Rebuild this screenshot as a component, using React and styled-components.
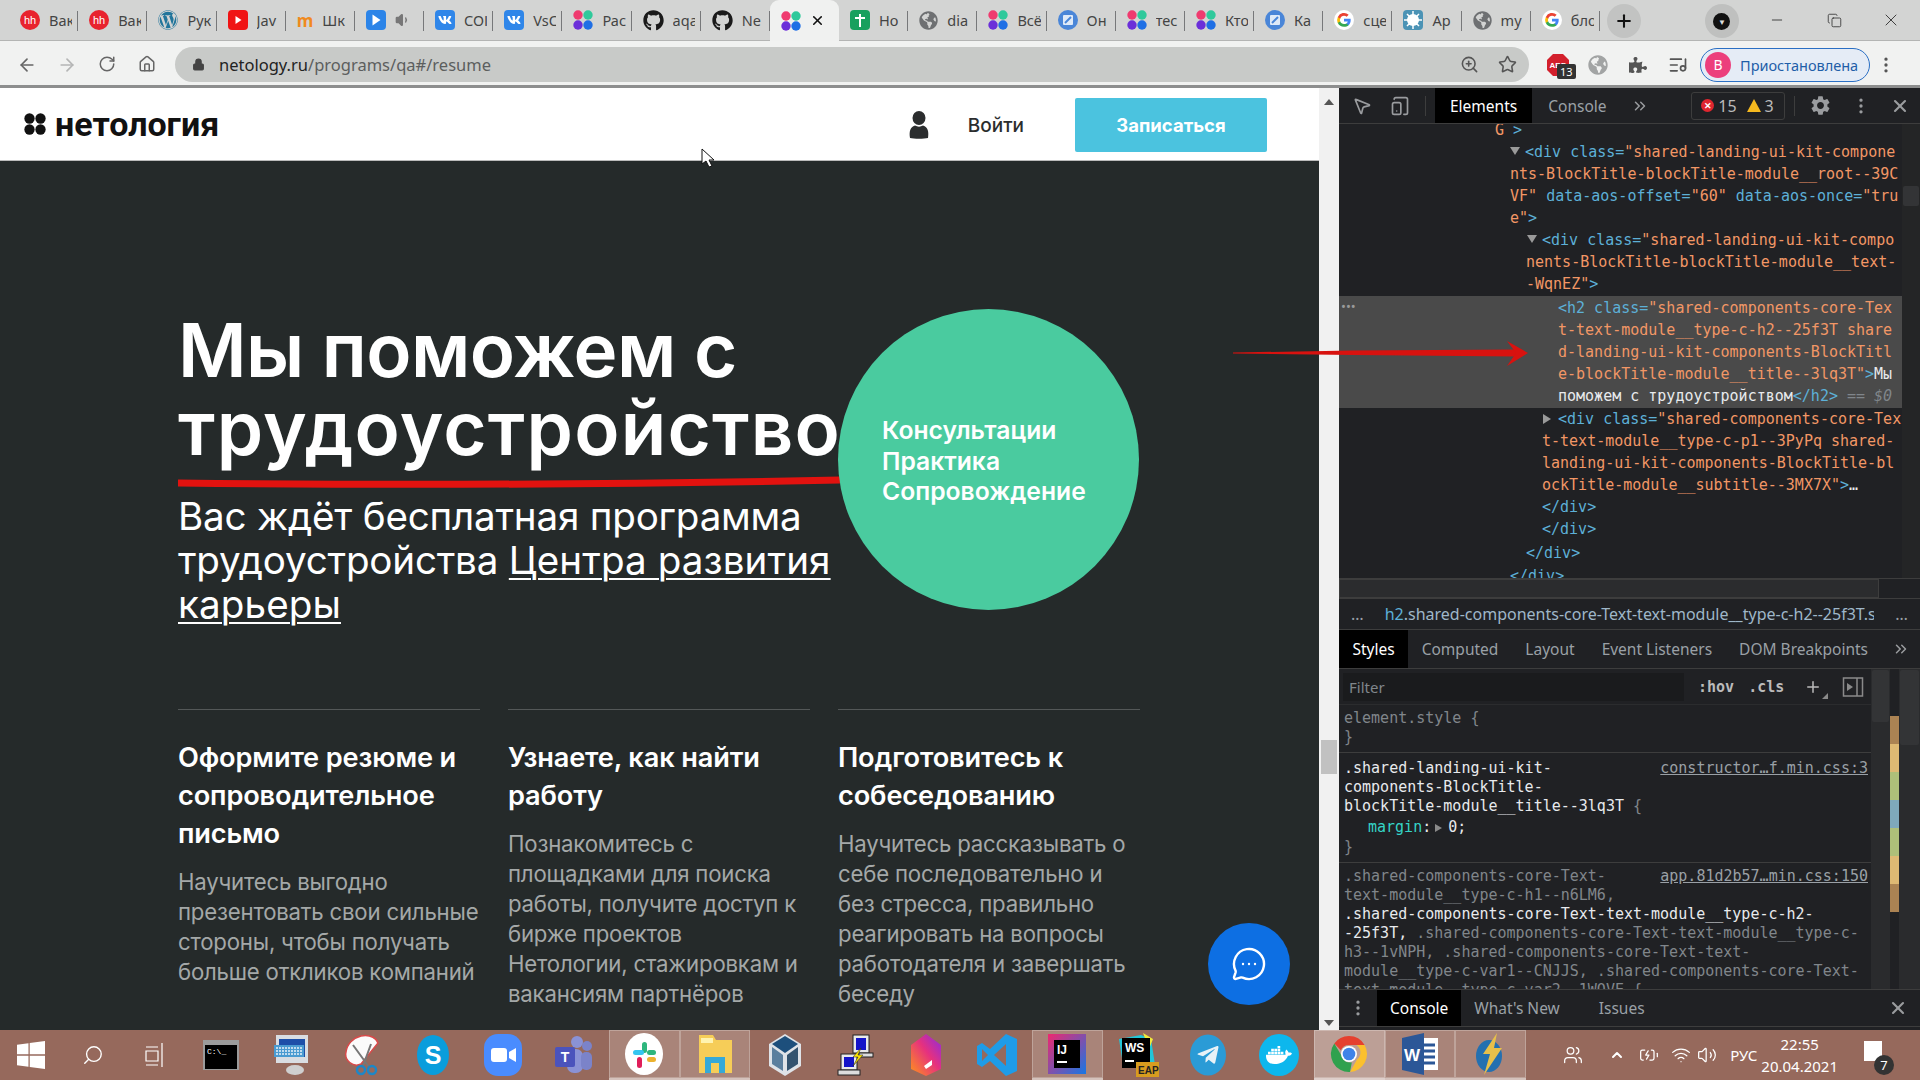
import React from "react";
import styled, { createGlobalStyle } from "styled-components";
import {
  ArrowLeft, ArrowRight, RotateCw, Home, Lock, ZoomIn, Star, ListMusic, MoreVertical,
  Plus, Minus, X, ChevronsRight, MousePointer2, TabletSmartphone, Search,
  Wifi, Volume1, Volume2, BatteryCharging, Users, ChevronUp, Copy, MessageCircleMore,
} from "lucide-react";
import { FaPuzzlePiece, FaGithub, FaVk, FaWordpress, FaWindows, FaTelegramPlane, FaDocker, FaGlobeAmericas } from "react-icons/fa";
import { MdSettings } from "react-icons/md";

const GlobalStyle = createGlobalStyle`
  html, body { margin: 0; padding: 0; background: #222; }
  * { box-sizing: border-box; }
`;

const UI = `"Noto Sans", "Open Sans", sans-serif`;
const MONO = `"DejaVu Sans Mono", "Liberation Mono", monospace`;

const Root = styled.div`
  width: 1920px;
  height: 1080px;
  overflow: hidden;
  position: relative;
  display: grid;
  grid-template-columns: 1920px;
  grid-template-rows: 41px 47px 942px 50px;
  font-family: ${UI};
`;

/* ---------- chrome ---------- */

const TabStrip = styled.div`
  background: #d3d4d3;
  display: flex;
  align-items: stretch;
  padding-left: 9px;
  border-bottom: 1px solid #b4b5b4;
`;
const Tab = styled.div`
  width: 69.2px;
  height: ${(p) => (p.$active ? "41px" : "40px")};
  display: flex;
  align-items: center;
  gap: 9px;
  padding: 0 6px 0 11px;
  position: relative;
  background: ${(p) => (p.$active ? "#f0f1f0" : "transparent")};
  border-radius: ${(p) => (p.$active ? "9px 9px 0 0" : "0")};
  color: #444;
  font-size: 14.5px;
  &::after {
    content: "";
    position: absolute;
    right: 0;
    top: 11px;
    height: 20px;
    width: 1px;
    background: ${(p) => (p.$active ? "transparent" : "#77787a")};
  }
`;
const TabLabel = styled.span`
  overflow: hidden;
  white-space: nowrap;
  flex: 1;
  display: flex;
  align-items: center;
`;
const StripButton = styled.div`
  width: 34px;
  height: 34px;
  border-radius: 50%;
  background: #c2c3c2;
  margin: 4px 0 0 ${(p) => p.$left}px;
  display: flex;
  align-items: center;
  justify-content: center;
  color: #111;
`;
const ProfileDot = styled(StripButton)`
  background: #bfc0bf;
`;
const DarkDot = styled.div`
  width: 17px;
  height: 17px;
  border-radius: 50%;
  background: #111;
  color: #ddd;
  font-size: 8px;
  display: flex;
  align-items: center;
  justify-content: center;
`;
const WinButton = styled.div`
  width: 57px;
  display: flex;
  align-items: center;
  justify-content: center;
  color: #222;
`;
const WinButtons = styled.div`
  display: flex;
  margin-left: 10px;
`;

const Toolbar = styled.div`
  background: #f1f2f1;
  display: flex;
  align-items: center;
  padding: 3px 0 0 0;
  color: #666;
  border-bottom: 3px solid #8d8e8e;
`;
const NavButton = styled.div`
  width: 40px;
  display: flex;
  justify-content: center;
  color: ${(p) => (p.$off ? "#b4b5b5" : "#666")};
`;
const NavGroup = styled.div`
  display: flex;
  padding-left: 7px;
`;
const Omnibox = styled.div`
  width: 1354px;
  height: 35px;
  margin-left: 8px;
  border-radius: 18px;
  background: #c8cac8;
  display: flex;
  align-items: center;
  padding: 0 12px 0 17px;
  gap: 14px;
  font-size: 16.5px;
  color: #5c5e5e;
`;
const UrlHost = styled.span`
  color: #222;
`;
const OmniIcons = styled.div`
  margin-left: auto;
  display: flex;
  gap: 19px;
  align-items: center;
  color: #555;
`;
const ExtSlot = styled.div`
  width: 40px;
  margin-left: ${(p) => p.$left || 0}px;
  display: flex;
  justify-content: center;
  position: relative;
  color: #555;
`;
const AbpBadge = styled.span`
  position: absolute;
  left: 19px;
  top: 11px;
  background: #333;
  color: #fff;
  font-size: 11px;
  line-height: 15px;
  padding: 0 3px;
  border-radius: 2px;
`;
const ProfilePill = styled.div`
  width: 170px;
  height: 34px;
  margin-left: 2px;
  border-radius: 17px;
  border: 1px solid #2a6fc4;
  background: #e5ecf6;
  display: flex;
  align-items: center;
  gap: 9px;
  padding-left: 4px;
  color: #1f5ea8;
  font-size: 14.5px;
  white-space: nowrap;
`;
const Avatar = styled.span`
  width: 26px;
  height: 26px;
  border-radius: 50%;
  background: #ec3f7c;
  color: #fff;
  font-size: 14px;
  display: flex;
  align-items: center;
  justify-content: center;
  flex: none;
`;
const ToolbarEnd = styled.div`
  margin-left: 6px;
  color: #555;
  display: flex;
`;

/* ---------- page ---------- */

const Main = styled.div`
  display: flex;
  min-height: 0;
  min-width: 0;
`;
const Page = styled.div`
  width: 1319px;
  display: flex;
  flex-direction: column;
  background: #252a2a;
  overflow: hidden;
  flex: none;
`;
const Header = styled.header`
  height: 73px;
  background: #fff;
  display: flex;
  align-items: center;
  padding: 2px 52px 0 24px;
  flex: none;
  border-bottom: 1px solid #bbb;
`;
const Brand = styled.div`
  display: flex;
  align-items: center;
  gap: 9px;
  font-family: Roboto, sans-serif;
  font-weight: 700;
  font-size: 34px;
  line-height: 34px;
  margin-top: -3px;
  color: #111;
`;
const Login = styled.div`
  margin-left: auto;
  display: flex;
  align-items: center;
  gap: 39px;
  color: #2b2d2e;
  font-family: Inter, sans-serif;
  font-size: 19px;
  font-weight: 500;
`;
const SignUp = styled.div`
  width: 192px;
  height: 54px;
  margin-left: 51px;
  background: #4bc3df;
  border-radius: 2px;
  color: #fff;
  font-family: Inter, sans-serif;
  font-size: 18.5px;
  font-weight: 700;
  display: flex;
  align-items: center;
  justify-content: center;
`;
const Hero = styled.section`
  flex: 1;
  padding: 148px 179px 0 178px;
  color: #fff;
  position: relative;
`;
const Top = styled.div`
  display: grid;
  grid-template-columns: 660px 302px;
  height: 400px;
`;
const Title = styled.h2`
  margin: 2px 0 0;
  font-family: Inter, sans-serif;
  font-size: 74.4px;
  line-height: 78px;
  font-weight: 600;
  letter-spacing: -0.6px;
  white-space: nowrap;
  position: relative;
`;
const TitleWide = styled.span`
  letter-spacing: 1.2px;
`;
const Underline = styled.svg`
  position: absolute;
  left: 0;
  top: 165px;
`;
const Subtitle = styled.div`
  margin-top: 27px;
  font-family: Inter, sans-serif;
  font-size: 38.6px;
  line-height: 44px;
  letter-spacing: -0.2px;
  a {
    color: inherit;
    letter-spacing: 0.1px;
    text-decoration: underline;
    text-decoration-thickness: 2px;
    text-underline-offset: 4px;
  }
`;
const Circle = styled.div`
  width: 301px;
  height: 301px;
  border-radius: 50%;
  background: #4acb9f;
  display: flex;
  flex-direction: column;
  justify-content: center;
  padding: 3px 0 0 44px;
  font-family: Inter, sans-serif;
  font-size: 24.7px;
  line-height: 30.5px;
  font-weight: 600;
  position: relative;
  z-index: 1;
`;
const Features = styled.div`
  display: grid;
  grid-template-columns: repeat(3, 302px);
  gap: 28px;
`;
const Feature = styled.div`
  border-top: 1px solid rgba(255, 255, 255, 0.22);
  padding-top: 29px;
`;
const FeatureTitle = styled.div`
  font-family: Inter, sans-serif;
  font-size: 27.2px;
  line-height: 38px;
  font-weight: 600;
  letter-spacing: -0.15px;
`;
const FeatureText = styled.div`
  margin-top: 14px;
  font-family: Inter, sans-serif;
  font-size: 22.2px;
  line-height: 30px;
  color: #a4a8a8;
  letter-spacing: -0.2px;
`;
const Chat = styled.div`
  position: absolute;
  left: 1208px;
  top: 762px;
  width: 82px;
  height: 82px;
  border-radius: 50%;
  background: #0d6fe3;
  color: #fff;
  display: flex;
  align-items: center;
  justify-content: center;
`;
const PageScroll = styled.div`
  width: 20px;
  flex: none;
  background: #f1f1f1;
  position: relative;
`;
const ScrollArrow = styled.div`
  position: absolute;
  left: 5px;
  top: ${(p) => p.$top}px;
  width: 0;
  height: 0;
  border-left: 5px solid transparent;
  border-right: 5px solid transparent;
  ${(p) => (p.$down ? "border-top: 6px solid #555;" : "border-bottom: 6px solid #555;")}
`;
const ScrollThumb = styled.div`
  position: absolute;
  left: 2px;
  right: 2px;
  top: 652px;
  height: 34px;
  background: #c1c1c1;
`;

/* ---------- devtools ---------- */

const Devtools = styled.div`
  flex: 1;
  background: #202124;
  color: #9aa0a6;
  display: flex;
  flex-direction: column;
  min-width: 0;
`;
const DevBar = styled.div`
  height: 36px;
  display: flex;
  align-items: center;
  border-bottom: 1px solid #3d3d3d;
  font-size: 15.5px;
  flex: none;
`;
const BarIcon = styled.div`
  display: flex;
  justify-content: center;
  align-items: center;
  width: ${(p) => p.$w || 38}px;
  margin-left: ${(p) => p.$left || 0}px;
  color: #9a9c9f;
`;
const DevTab = styled.div`
  height: 100%;
  display: flex;
  align-items: center;
  padding: 0 ${(p) => p.$pad || 13.5}px;
  background: ${(p) => (p.$active ? "#000" : "transparent")};
  color: ${(p) => (p.$active ? "#fff" : "#9aa0a6")};
  white-space: nowrap;
`;
const Divider = styled.div`
  width: 1px;
  height: 20px;
  background: #3d3d3d;
  margin: 0 ${(p) => p.$right || 0}px 0 ${(p) => p.$left || 0}px;
`;
const Counts = styled.div`
  width: 94px;
  height: 28px;
  margin-left: ${(p) => p.$left}px;
  border: 1px solid #3d3d3d;
  border-radius: 3px;
  display: flex;
  align-items: center;
  justify-content: center;
  gap: 4px;
  color: #bbb;
  font-size: 16px;
`;
const ErrorDot = styled.span`
  width: 13px;
  height: 13px;
  border-radius: 50%;
  background: #e0262f;
  color: #fff;
  font-size: 9px;
  font-weight: 700;
  display: flex;
  align-items: center;
  justify-content: center;
`;
const WarnMark = styled.span`
  width: 0;
  height: 0;
  margin-left: 6px;
  border-left: 7px solid transparent;
  border-right: 7px solid transparent;
  border-bottom: 13px solid #f5b91f;
`;
const DomWrap = styled.div`
  display: flex;
  height: 454px;
  flex: none;
`;
const DomPanel = styled.div`
  flex: 1;
  overflow: hidden;
  font-family: ${MONO};
  font-size: 15px;
  line-height: 22px;
`;
const DomLine = styled.div`
  white-space: pre;
  padding-left: ${(p) => p.$x}px;
  height: ${(p) => p.$h || 22}px;
  position: relative;
  color: #e8eaed;
`;
const Tri = styled.span`
  position: absolute;
  margin-left: -15px;
  top: 6px;
  width: 0;
  height: 0;
  ${(p) =>
    p.$open
      ? "border-left: 5px solid transparent; border-right: 5px solid transparent; border-top: 8px solid #9a9a9a;"
      : "border-top: 5px solid transparent; border-bottom: 5px solid transparent; border-left: 8px solid #9a9a9a;"}
`;
const Selected = styled.div`
  background: #4a4a4a;
  padding: 1px 0 1px;
  margin: 1px 0 0;
  position: relative;
`;
const Dots = styled.span`
  position: absolute;
  left: 2px;
  top: -1px;
  color: #999;
  font-size: 13px;
  font-family: ${UI};
`;
const N = styled.span`
  color: #5db0d7;
`;
const V = styled.span`
  color: #f29766;
`;
const HScroll = styled.div`
  height: 21px;
  flex: none;
  padding-right: 41px;
  border-top: 1px solid #3d3d3d;
  border-bottom: 1px solid #3d3d3d;
  background: #202124;
`;
const HThumb = styled.div`
  height: 100%;
  background: #2b2c2e;
  border: 1px solid #3d3d3d;
`;
const Crumbs = styled.div`
  height: 31px;
  flex: none;
  display: flex;
  align-items: center;
  font-size: 16px;
  color: #9aa0a6;
  padding: 0 12px;
  border-bottom: 1px solid #3d3d3d;
  white-space: nowrap;
  gap: 21px;
`;
const CrumbText = styled.span`
  width: 496px;
  overflow: hidden;
  color: #9fb7c9;
  span { color: #5db0d7; }
`;
const StylesBar = styled(DevBar)`
  height: 39px;
`;
const StylesBody = styled.div`
  flex: 1;
  display: flex;
  min-height: 0;
`;
const RulesCol = styled.div`
  width: 532px;
  flex: none;
  display: flex;
  flex-direction: column;
  overflow: hidden;
`;
const FilterRow = styled.div`
  height: 36px;
  display: flex;
  align-items: center;
  padding: 0 4px;
  border-bottom: 1px solid #2b2c2e;
  flex: none;
`;
const FilterInput = styled.div`
  width: 341px;
  height: 28px;
  background: #1a1b1d;
  color: #80868b;
  font-size: 15px;
  line-height: 28px;
  padding-left: 6px;
`;
const FilterTool = styled.div`
  font-family: ${MONO};
  font-weight: 700;
  font-size: 15px;
  color: #bbb;
  margin-left: ${(p) => p.$left}px;
  display: flex;
  position: relative;
`;
const CornerMark = styled.span`
  position: absolute;
  right: -6px;
  bottom: -3px;
  width: 0;
  height: 0;
  border-left: 6px solid transparent;
  border-bottom: 6px solid #8a8a8a;
`;
const Rule = styled.div`
  padding: ${(p) => p.$top || 6}px 2px 5px 5px;
  border-bottom: 1px solid #3d3d3d;
  font-family: ${MONO};
  font-size: 15px;
  line-height: 19px;
  position: relative;
  color: #e8eaed;
  flex: none;
  &:last-child { border-bottom: 0; }
`;
const Source = styled.span`
  position: absolute;
  right: 3px;
  top: ${(p) => p.$top || 6}px;
  color: #9aa0a6;
  text-decoration: underline;
  background: #202124;
`;
const Dim = styled.span`
  color: #80868b;
`;
const Prop = styled.div`
  padding-left: 24px;
  line-height: 22px;
  color: #e8eaed;
  span { color: #35d4c7; }
`;
const MiniTri = styled.span`
  display: inline-block;
  border-top: 4px solid transparent;
  border-bottom: 4px solid transparent;
  border-left: 7px solid #8a8a8a;
  margin: 0 6px 0 4px;
`;
const ScrollRail = styled.div`
  width: ${(p) => p.$w}px;
  background: ${(p) => p.$bg || "#1c1d1f"};
  flex: none;
  position: relative;
`;
const ScrollGrip = styled.div`
  background: #333436;
  height: ${(p) => p.$h}px;
  border-radius: 2px;
  margin: ${(p) => p.$top || 1}px 1px 1px;
`;
const MiniMark = styled.div`
  height: 28px;
  background: ${(p) => p.$c};
`;
const MiniMap = styled.div`
  padding-top: 47px;
`;
const Drawer = styled.div`
  height: 38px;
  flex: none;
  border-top: 1px solid #3d3d3d;
  border-bottom: 1px solid #3d3d3d;
  display: flex;
  align-items: center;
  font-size: 15.5px;
  margin-bottom: 3px;
`;
const DrawerClose = styled(BarIcon)`
  margin-left: auto;
`;

/* ---------- taskbar ---------- */

const Taskbar = styled.div`
  background: #96695c;
  display: flex;
  align-items: center;
  color: #fff;
`;
const Launcher = styled.div`
  width: ${(p) => p.$w || 70.5}px;
  height: 50px;
  display: flex;
  align-items: center;
  justify-content: center;
  flex: none;
  background: ${(p) => (p.$on ? (p.$bright ? "rgba(255,255,255,.36)" : "rgba(255,255,255,.18)") : "transparent")};
  box-shadow: ${(p) => (p.$on ? "inset 0 0 0 1px rgba(255,255,255,.25)" : "none")};
  border-bottom: ${(p) => (p.$on ? "2px solid rgba(255,255,255,.5)" : "0")};
`;
const Tray = styled.div`
  margin-left: auto;
  display: flex;
  align-items: center;
  padding-right: 32px;
`;
const TrayIcon = styled.span`
  display: flex;
  margin-left: ${(p) => p.$left}px;
`;
const Lang = styled.span`
  font-size: 15px;
  margin: 0 4px 0 13px;
`;
const Clock = styled.div`
  text-align: center;
  font-size: 15px;
  line-height: 22px;
  margin-right: 24px;
`;
const Notice = styled.div`
  position: relative;
  width: 26px;
  height: 28px;
`;
const NoticeCount = styled.span`
  position: absolute;
  right: -6px;
  bottom: -6px;
  width: 20px;
  height: 20px;
  border-radius: 50%;
  background: #333;
  font-size: 13px;
  display: flex;
  align-items: center;
  justify-content: center;
`;
const NoticeSheet = styled.span`
  position: absolute;
  left: 2px;
  top: 0;
  width: 18px;
  height: 20px;
  background: #fff;
`;

/* ---------- overlay bits ---------- */

const RedArrow = styled.svg`
  position: absolute;
  left: 1233px;
  top: 335px;
  z-index: 3;
`;
const Cursor = styled.svg`
  position: absolute;
  left: 701px;
  top: 148px;
  z-index: 3;
`;

/* ---------- drawn icons ---------- */

const NetologyMark = ({ size = 20, mono }) => (
  <svg width={size} height={size} viewBox="0 0 20 20">
    <circle cx="5" cy="5" r="4.7" fill={mono ? "#111" : "#ef3b6f"} />
    <circle cx="15" cy="5" r="4.7" fill={mono ? "#111" : "#2fc99b"} />
    <circle cx="5" cy="15" r="4.7" fill={mono ? "#111" : "#6b2fd9"} />
    <circle cx="15" cy="15" r="4.7" fill={mono ? "#111" : "#1f6fe5"} />
  </svg>
);
const UserIcon = () => (
  <svg width="20" height="28" viewBox="0 0 20 28" fill="#2b2d2e">
    <ellipse cx="10" cy="7" rx="6.500" ry="7" />
    <path d="M1 27c-1-6 0-11 5-12.500 2.500 1.500 5.500 1.500 8 0 5 1.500 6 6.500 5 12.500-4 1-14 1-18 0z" />
  </svg>
);
const HhIcon = () => (
  <svg width="20" height="20" viewBox="0 0 20 20">
    <circle cx="10" cy="10" r="10" fill="#e8232e" />
    <text x="10" y="14" fontSize="11" fill="#fff" textAnchor="middle" fontFamily="Liberation Sans">hh</text>
  </svg>
);
const SquareIcon = ({ bg, children }) => (
  <svg width="20" height="20" viewBox="0 0 20 20">
    <rect width="20" height="20" rx="4" fill={bg} />
    {children}
  </svg>
);
const GoogleIcon = ({ size = 20 }) => (
  <svg width={size} height={size} viewBox="0 0 24 24">
    <circle cx="12" cy="12" r="12" fill="#fff" />
    <path d="M20 12.2c0-.6 0-1.1-.1-1.6H12v3.1h4.5a3.9 3.9 0 0 1-1.7 2.5v2.1h2.7c1.6-1.5 2.5-3.6 2.5-6.1z" fill="#4285f4" />
    <path d="M12 20.2c2.2 0 4.1-.7 5.5-2l-2.7-2.1c-.7.5-1.700.8-2.800.8-2.100 0-3.900-1.400-4.600-3.400H4.600v2.100A8.200 8.200 0 0 0 12 20.200z" fill="#34a853" />
    <path d="M7.400 13.500a5 5 0 0 1 0-3.100V8.300H4.600a8.200 8.200 0 0 0 0 7.300z" fill="#fbbc05" />
    <path d="M12 6.900c1.200 0 2.300.4 3.200 1.200l2.400-2.400A8.200 8.200 0 0 0 4.600 8.300l2.800 2.100c.7-2 2.500-3.500 4.600-3.500z" fill="#ea4335" />
  </svg>
);
const EdIcon = () => (
  <svg width="20" height="20" viewBox="0 0 20 20">
    <circle cx="10" cy="10" r="10" fill="#4a86d8" />
    <rect x="5" y="5" width="10" height="10" rx="1" fill="#dfeaf8" />
    <path d="M7 13l6-6" stroke="#4a86d8" strokeWidth="2" />
  </svg>
);
const tabIcons = {
  hh: <HhIcon />,
  wp: <FaWordpress size={20} color="#21759b" />,
  yt: (
    <SquareIcon bg="#f01414">
      <path d="M7.500 6l6 4-6 4z" fill="#fff" />
    </SquareIcon>
  ),
  moodle: <span style={{ color: "#f08a1d", fontWeight: 700, fontSize: 17 }}>m</span>,
  play: (
    <SquareIcon bg="#2b84e8">
      <path d="M6.500 4.500l8 5.500-8 5.500z" fill="#fff" />
    </SquareIcon>
  ),
  vk: (
    <SquareIcon bg="#2f86e9">
      <FaVk x="3" y="3" size={14} color="#fff" />
    </SquareIcon>
  ),
  net: <NetologyMark />,
  gh: <FaGithub size={21} color="#1a1a1a" />,
  sheet: (
    <SquareIcon bg="#18a05e">
      <path d="M9 4h2v3h4v2h-4v8H9V9H5V7h4z" fill="#fff" />
    </SquareIcon>
  ),
  globe: <FaGlobeAmericas size={19} color="#6e7072" />,
  ed: <EdIcon />,
  google: <GoogleIcon />,
  splat: (
    <SquareIcon bg="#4b93b5">
      <circle cx="10" cy="10" r="6" fill="#fff" />
      <path d="M10 1v18M1 10h18M4 4l12 12M16 4L4 16" stroke="#fff" strokeWidth="1.500" />
    </SquareIcon>
  ),
};
const tabs = [
  ["hh", "Вак"], ["hh", "Вак"], ["wp", "Рук"], ["yt", "Jav"], ["moodle", "Шк"], ["play", <Volume1 size={16} color="#777" fill="#777" />],
  ["vk", "СОІ"], ["vk", "VsС"], ["net", "Рас"], ["gh", "aqa"], ["gh", "Ne"], ["net", "", true],
  ["sheet", "Но"], ["globe", "dia"], ["net", "Всё"], ["ed", "Он"], ["net", "тес"], ["net", "Кто"],
  ["ed", "Ка"], ["google", "сце"], ["splat", "Ар"], ["globe", "my"], ["google", "бло"],
];

const ChromeLogo = () => (
  <svg width="38" height="38" viewBox="0 0 38 38">
    <path d="M19 1a18 18 0 0 1 15.600 9H19a9 9 0 0 0-8.200 5.300L4.300 8.500A18 18 0 0 1 19 1z" fill="#e5402f" />
    <path d="M34.600 10A18 18 0 0 1 20 37l7-12.500A9 9 0 0 0 26.500 10z" fill="#fbc02d" />
    <path d="M4.300 8.500l8 13.500a9 9 0 0 0 9.500 5.500L20 37A18 18 0 0 1 4.300 8.500z" fill="#30a14e" />
    <circle cx="19" cy="19" r="8" fill="#fff" />
    <circle cx="19" cy="19" r="6.300" fill="#3f83e8" />
  </svg>
);
const launchers = [
  {
    icon: (
      <svg width="36" height="36" viewBox="0 0 36 36">
        <rect y="3" width="36" height="30" fill="#9b9b9b" />
        <rect x="2" y="8" width="32" height="24" fill="#000" />
        <text x="4" y="17" fontSize="8" fill="#fff" fontFamily="Liberation Mono">C:\_</text>
      </svg>
    ),
  },
  {
    icon: (
      <svg width="38" height="42" viewBox="0 0 38 42">
        <rect x="3" y="1" width="32" height="28" fill="#d9dde2" />
        <rect x="6" y="5" width="26" height="18" fill="#1d4fa8" />
        <rect x="1" y="11" width="30" height="12" fill="#4a9bd1" />
        <path d="M3 14h26M3 17h26M3 20h26" stroke="#e9f2f9" strokeWidth="1.500" strokeDasharray="2 1" />
        <ellipse cx="22" cy="36" rx="9" ry="5" fill="#cfcfcf" />
      </svg>
    ),
  },
  {
    icon: (
      <svg width="38" height="42" viewBox="0 0 38 42">
        <path d="M18 2c10-2 16 3 17 7L18 30C10 34 1 26 3 18 4 10 10 4 18 2z" fill="#fbfbfb" stroke="#d84a4a" strokeWidth="1.500" />
        <path d="M10 11l16 22M28 10L20 32" stroke="#777" strokeWidth="2" />
        <circle cx="29" cy="36" r="4" fill="none" stroke="#1d87c7" strokeWidth="2.500" />
        <circle cx="18" cy="36" r="4" fill="none" stroke="#1d87c7" strokeWidth="2.500" />
      </svg>
    ),
  },
  {
    icon: (
      <svg width="36" height="42" viewBox="0 0 36 42">
        <ellipse cx="18" cy="21" rx="16" ry="20" fill="#0a9ddc" />
        <text x="18" y="30" textAnchor="middle" fontSize="25" fontWeight="700" fill="#fff" fontFamily="Liberation Sans">S</text>
      </svg>
    ),
  },
  {
    icon: (
      <svg width="38" height="42" viewBox="0 0 38 42">
        <rect width="38" height="42" rx="14" fill="#4a8cff" />
        <rect x="7" y="14" width="16" height="14" rx="3" fill="#fff" />
        <path d="M25 18l7-4v14l-7-4z" fill="#fff" />
      </svg>
    ),
  },
  {
    icon: (
      <svg width="42" height="42" viewBox="0 0 42 42">
        <circle cx="34" cy="12" r="5" fill="#7b83c9" />
        <circle cx="24" cy="8" r="6" fill="#8a92d6" />
        <rect x="14" y="15" width="16" height="24" rx="7" fill="#8a92d6" />
        <rect x="28" y="18" width="11" height="18" rx="5" fill="#7b83c9" />
        <rect x="2" y="13" width="20" height="20" rx="2" fill="#4b53bc" />
        <text x="12" y="28" textAnchor="middle" fontSize="14" fontWeight="700" fill="#fff" fontFamily="Liberation Sans">T</text>
      </svg>
    ),
  },
  {
    on: true,
    icon: (
      <svg width="38" height="42" viewBox="0 0 38 42">
        <ellipse cx="19" cy="21" rx="19" ry="21" fill="#fff" />
        <rect x="17" y="9" width="5" height="11" rx="2.500" fill="#2eb67d" />
        <rect x="22" y="17" width="9" height="5" rx="2.500" fill="#2eb67d" />
        <rect x="8" y="17" width="11" height="5" rx="2.500" fill="#36c5f0" />
        <rect x="12" y="24" width="5" height="11" rx="2.500" fill="#e01e5a" />
        <rect x="22" y="24" width="9" height="5" rx="2.500" fill="#ecb22e" />
      </svg>
    ),
  },
  {
    on: true,
    icon: (
      <svg width="36" height="38" viewBox="0 0 36 38">
        <path d="M2 0h14l3 5h16v33H2z" fill="#f6cd58" />
        <rect x="4" y="3" width="12" height="5" fill="#fff3b0" />
        <rect x="8" y="22" width="20" height="16" fill="#35a9d8" />
        <rect x="14" y="28" width="8" height="10" fill="#f6cd58" />
      </svg>
    ),
  },
  {
    icon: (
      <svg width="36" height="44" viewBox="0 0 36 44">
        <path d="M18 1l16 10v22L18 43 2 33V11z" fill="#dfe3e8" />
        <path d="M18 3l13 8-13 9-13-9z" fill="#1d4f7c" />
        <path d="M5 14l11 8v16L5 31z" fill="#5b7f9e" />
        <path d="M31 14l-11 8v16l11-7z" fill="#33536f" />
      </svg>
    ),
  },
  {
    icon: (
      <svg width="38" height="42" viewBox="0 0 38 42">
        <rect x="16" y="1" width="16" height="18" fill="#e9e9e9" stroke="#222" />
        <rect x="19" y="4" width="10" height="12" fill="#1414c8" />
        <rect x="22" y="19" width="14" height="4" fill="#ddd" stroke="#222" />
        <rect x="4" y="20" width="16" height="16" fill="#e9e9e9" stroke="#222" />
        <rect x="7" y="23" width="10" height="10" fill="#1414c8" />
        <rect x="1" y="36" width="22" height="5" fill="#ddd" stroke="#222" />
        <path d="M24 14l-8 9h5l-5 9 10-11h-5z" fill="#ffe600" stroke="#222" strokeWidth=".5" />
      </svg>
    ),
  },
  {
    icon: (
      <svg width="32" height="44" viewBox="0 0 32 44">
        <defs>
          <linearGradient id="spaceGrad" x1="0" y1="1" x2="1" y2="0">
            <stop offset="0" stopColor="#ff9419" />
            <stop offset=".55" stopColor="#e6317e" />
            <stop offset="1" stopColor="#8a2be2" />
          </linearGradient>
        </defs>
        <path d="M16 1l15 11v24l-15 7-15-7V12z" fill="url(#spaceGrad)" />
        <path d="M14 33l8-6v5l-6 4z" fill="#fff" />
      </svg>
    ),
  },
  {
    icon: (
      <svg width="42" height="44" viewBox="0 0 42 44">
        <path d="M30 1l11 5v32l-11 5-16-15-8 6-5-3V13l5-3 8 6z" fill="#1e9ce8" />
        <path d="M30 11L18 22l12 11z" fill="#96695c" />
        <path d="M6 16v12l6-6z" fill="#96695c" />
      </svg>
    ),
  },
  {
    on: true,
    icon: (
      <svg width="38" height="40" viewBox="0 0 38 40">
        <defs>
          <linearGradient id="ijGrad" x1="0" y1="0" x2="1" y2="1">
            <stop offset="0" stopColor="#f0276f" />
            <stop offset="1" stopColor="#1677e5" />
          </linearGradient>
        </defs>
        <rect width="38" height="40" fill="url(#ijGrad)" />
        <rect x="6" y="6" width="26" height="28" fill="#000" />
        <text x="9" y="20" fontSize="12" fontWeight="700" fill="#fff" fontFamily="Liberation Sans">IJ</text>
        <rect x="9" y="27" width="10" height="2" fill="#fff" />
      </svg>
    ),
  },
  {
    icon: (
      <svg width="42" height="44" viewBox="0 0 42 44">
        <path d="M2 6l22-4 10 4 4 26H6z" fill="#22c6d8" />
        <path d="M26 0l10 6-4 10z" fill="#f2e93a" />
        <rect x="5" y="5" width="28" height="30" fill="#000" />
        <text x="8" y="19" fontSize="12" fontWeight="700" fill="#fff" fontFamily="Liberation Sans">WS</text>
        <rect x="8" y="27" width="9" height="2" fill="#fff" />
        <rect x="19" y="29" width="23" height="15" fill="#d89c1e" />
        <text x="21" y="41" fontSize="10" fontWeight="700" fill="#222" fontFamily="Liberation Sans">EAP</text>
      </svg>
    ),
  },
  {
    icon: (
      <svg width="38" height="42" viewBox="0 0 38 42">
        <ellipse cx="19" cy="21" rx="18" ry="20.500" fill="#2a9bd6" />
        <FaTelegramPlane x="7" y="9" size={24} color="#e8f2f7" />
      </svg>
    ),
  },
  {
    icon: (
      <svg width="40" height="42" viewBox="0 0 40 42">
        <ellipse cx="20" cy="21" rx="20" ry="21" fill="#0db7ed" />
        <FaDocker x="7" y="8" size={26} color="#fff" />
      </svg>
    ),
  },
  { on: true, bright: true, icon: <ChromeLogo /> },
  {
    on: true,
    icon: (
      <svg width="36" height="42" viewBox="0 0 36 42">
        <rect x="12" y="5" width="24" height="32" fill="#fff" />
        <path d="M20 12h13M20 18h13M20 24h13M20 30h13" stroke="#2b5797" strokeWidth="3" />
        <path d="M0 5l22-5v42L0 37z" fill="#2b5797" />
        <text x="10" y="28" textAnchor="middle" fontSize="17" fontWeight="700" fill="#fff" fontFamily="Liberation Sans">W</text>
      </svg>
    ),
  },
  {
    on: true,
    icon: (
      <svg width="30" height="44" viewBox="0 0 30 44">
        <ellipse cx="14" cy="24" rx="13" ry="16" fill="#2470b0" />
        <path d="M22 1L8 22h7l-6 21 18-27h-8z" fill="#e8c04a" />
      </svg>
    ),
  },
];

export default function App() {
  return (
    <Root>
      <GlobalStyle />

      <TabStrip>
        {tabs.map(([icon, label, active], i) => (
          <Tab key={i} $active={active}>
            {tabIcons[icon]}
            {active ? <X size={15} color="#111" strokeWidth={2.500} /> : <TabLabel>{label}</TabLabel>}
          </Tab>
        ))}
        <StripButton $left={7}>
          <Plus size={20} strokeWidth={2.500} />
        </StripButton>
        <ProfileDot $left={64}>
          <DarkDot>▼</DarkDot>
        </ProfileDot>
        <WinButtons>
          <WinButton><Minus size={16} strokeWidth={1.200} /></WinButton>
          <WinButton><Copy size={15} strokeWidth={1.200} /></WinButton>
          <WinButton><X size={20} strokeWidth={1} /></WinButton>
        </WinButtons>
      </TabStrip>

      <Toolbar>
        <NavGroup>
          <NavButton><ArrowLeft size={20} /></NavButton>
          <NavButton $off><ArrowRight size={20} /></NavButton>
          <NavButton><RotateCw size={18} /></NavButton>
          <NavButton><Home size={18} /></NavButton>
        </NavGroup>
        <Omnibox>
          <Lock size={13} fill="#444" color="#444" />
          <span><UrlHost>netology.ru</UrlHost>/programs/qa#/resume</span>
          <OmniIcons>
            <ZoomIn size={19} />
            <Star size={19} />
          </OmniIcons>
        </Omnibox>
        <ExtSlot $left={9}>
          <svg width="24" height="24" viewBox="0 0 24 24">
            <path d="M7 1h10l6 6v10l-6 6H7l-6-6V7z" fill="#d3202c" />
            <text x="12" y="15" textAnchor="middle" fontSize="8" fontWeight="700" fill="#fff" fontFamily="Liberation Sans">ABP</text>
          </svg>
          <AbpBadge>13</AbpBadge>
        </ExtSlot>
        <ExtSlot><FaGlobeAmericas size={20} color="#a2a4a4" /></ExtSlot>
        <ExtSlot><FaPuzzlePiece size={18} /></ExtSlot>
        <ExtSlot><ListMusic size={20} /></ExtSlot>
        <ProfilePill>
          <Avatar>В</Avatar>
          Приостановлена
        </ProfilePill>
        <ToolbarEnd><MoreVertical size={20} /></ToolbarEnd>
      </Toolbar>

      <Main>
        <Page>
          <Header>
            <Brand>
              <NetologyMark size={22} mono />
              нетология
            </Brand>
            <Login>
              <UserIcon />
              Войти
            </Login>
            <SignUp>Записаться</SignUp>
          </Header>
          <Hero>
            <Top>
              <div>
                <Title>
                  Мы поможем с<br />
                  <TitleWide>трудоустройством</TitleWide>
                  <Underline width="662" height="12" viewBox="0 0 662 12">
                    <path d="M0 7C180 9 420 9 662 4" stroke="#e2120f" strokeWidth="7" fill="none" />
                  </Underline>
                </Title>
                <Subtitle>
                  Вас ждёт бесплатная программа трудоустройства <a>Центра развития карьеры</a>
                </Subtitle>
              </div>
              <Circle>
                <div>Консультации</div>
                <div>Практика</div>
                <div>Сопровождение</div>
              </Circle>
            </Top>
            <Features>
              <Feature>
                <FeatureTitle>Оформите резюме и сопроводительное письмо</FeatureTitle>
                <FeatureText>Научитесь выгодно презентовать свои сильные стороны, чтобы получать больше откликов компаний</FeatureText>
              </Feature>
              <Feature>
                <FeatureTitle>Узнаете, как найти работу</FeatureTitle>
                <FeatureText>Познакомитесь с площадками для поиска работы, получите доступ к бирже проектов<br />Нетологии, стажировкам и вакансиям партнёров</FeatureText>
              </Feature>
              <Feature>
                <FeatureTitle>Подготовитесь к собеседованию</FeatureTitle>
                <FeatureText>Научитесь рассказывать о себе последовательно и без стресса, правильно реагировать на вопросы работодателя и завершать беседу</FeatureText>
              </Feature>
            </Features>
            <Chat><MessageCircleMore size={36} strokeWidth={1.600} /></Chat>
          </Hero>
        </Page>

        <PageScroll>
          <ScrollArrow $top={11} />
          <ScrollThumb />
          <ScrollArrow $top={932} $down />
        </PageScroll>

        <Devtools>
          <DevBar>
            <BarIcon $left={4}><MousePointer2 size={20} /></BarIcon>
            <BarIcon><TabletSmartphone size={20} /></BarIcon>
            <Divider $left={6} $right={9} />
            <DevTab $active $pad={15}>Elements</DevTab>
            <DevTab $pad={16}>Console</DevTab>
            <BarIcon $w={20} $left={7}><ChevronsRight size={18} /></BarIcon>
            <Counts $left={41}>
              <ErrorDot>✕</ErrorDot> 15 <WarnMark /> 3
            </Counts>
            <Divider $left={9} />
            <BarIcon $left={7}><MdSettings size={23} /></BarIcon>
            <BarIcon $left={2}><MoreVertical size={20} /></BarIcon>
            <BarIcon $left={1}><X size={20} strokeWidth={2.500} /></BarIcon>
          </DevBar>

          <DomWrap>
            <DomPanel>
              <DomLine $x={156} style={{ marginTop: -5 }}><V>G</V> <N>&gt;</N></DomLine>
              <DomLine $x={186}><Tri $open /><N>&lt;div class=</N><V>"shared-landing-ui-kit-compone</V></DomLine>
              <DomLine $x={171}><V>nts-BlockTitle-blockTitle-module__root--39C</V></DomLine>
              <DomLine $x={171}><V>VF"</V> <N>data-aos-offset=</N><V>"60"</V> <N>data-aos-once=</N><V>"tru</V></DomLine>
              <DomLine $x={171}><V>e"</V><N>&gt;</N></DomLine>
              <DomLine $x={203}><Tri $open /><N>&lt;div class=</N><V>"shared-landing-ui-kit-compo</V></DomLine>
              <DomLine $x={187}><V>nents-BlockTitle-blockTitle-module__text-</V></DomLine>
              <DomLine $x={187}><V>-WqnEZ"</V><N>&gt;</N></DomLine>
              <Selected>
                <Dots>•••</Dots>
                <DomLine $x={219}><N>&lt;h2 class=</N><V>"shared-components-core-Tex</V></DomLine>
                <DomLine $x={219}><V>t-text-module__type-c-h2--25f3T share</V></DomLine>
                <DomLine $x={219}><V>d-landing-ui-kit-components-BlockTitl</V></DomLine>
                <DomLine $x={219}><V>e-blockTitle-module__title--3lq3T"</V><N>&gt;</N>Мы</DomLine>
                <DomLine $x={219}>поможем с трудоустройством<N>&lt;/h2&gt;</N> <Dim>== <i>$0</i></Dim></DomLine>
              </Selected>
              <DomLine $x={219}><Tri /><N>&lt;div class=</N><V>"shared-components-core-Tex</V></DomLine>
              <DomLine $x={203}><V>t-text-module__type-c-p1--3PyPq shared-</V></DomLine>
              <DomLine $x={203}><V>landing-ui-kit-components-BlockTitle-bl</V></DomLine>
              <DomLine $x={203}><V>ockTitle-module__subtitle--3MX7X"</V><N>&gt;</N>…</DomLine>
              <DomLine $x={203}><N>&lt;/div&gt;</N></DomLine>
              <DomLine $x={203} $h={24}><N>&lt;/div&gt;</N></DomLine>
              <DomLine $x={187} $h={23}><N>&lt;/div&gt;</N></DomLine>
              <DomLine $x={171}><N>&lt;/div&gt;</N></DomLine>
            </DomPanel>
            <ScrollRail $w={18} $bg="#242526"><ScrollGrip $h={20} $top={62} /></ScrollRail>
          </DomWrap>
          <HScroll><HThumb /></HScroll>
          <Crumbs>
            <span>…</span>
            <CrumbText><span>h2</span>.shared-components-core-Text-text-module__type-c-h2--25f3T.sh</CrumbText>
            <span>…</span>
          </Crumbs>
          <StylesBar>
            <DevTab $active>Styles</DevTab>
            <DevTab>Computed</DevTab>
            <DevTab>Layout</DevTab>
            <DevTab>Event Listeners</DevTab>
            <DevTab>DOM Breakpoints</DevTab>
            <BarIcon $w={20} $left={9}><ChevronsRight size={18} /></BarIcon>
          </StylesBar>
          <StylesBody>
            <RulesCol>
              <FilterRow>
                <FilterInput>Filter</FilterInput>
                <FilterTool $left={14}>:hov</FilterTool>
                <FilterTool $left={14}>.cls</FilterTool>
                <FilterTool $left={20}><Plus size={18} /><CornerMark /></FilterTool>
                <FilterTool $left={20}>
                  <svg width="22" height="22" viewBox="0 0 22 22" fill="none" stroke="#8a8a8a" strokeWidth="1.500">
                    <rect x="1.500" y="2" width="19" height="18" />
                    <path d="M15 2v18" />
                    <path d="M5 7l6 4-6 4z" fill="#8a8a8a" stroke="none" />
                  </svg>
                </FilterTool>
              </FilterRow>
              <Rule $top={4}>
                <Dim>element.style {"{"}</Dim>
                <br />
                <Dim>{"}"}</Dim>
              </Rule>
              <Rule $top={6}>
                <Source $top={6}>constructor…f.min.css:3</Source>
                .shared-landing-ui-kit-
                <br />
                components-BlockTitle-
                <br />
                blockTitle-module__title--3lq3T <Dim>{"{"}</Dim>
                <Prop><span>margin</span>:<MiniTri />0;</Prop>
                <Dim>{"}"}</Dim>
              </Rule>
              <Rule $top={4}>
                <Source $top={4}>app.81d2b57…min.css:150</Source>
                <Dim>
                  .shared-components-core-Text-
                  <br />
                  text-module__type-c-h1--n6LM6,
                </Dim>
                <br />
                .shared-components-core-Text-text-module__type-c-h2-
                <br />
                -25f3T, <Dim>.shared-components-core-Text-text-module__type-c-</Dim>
                <br />
                <Dim>
                  h3--1vNPH, .shared-components-core-Text-text-
                  <br />
                  module__type-c-var1--CNJJS, .shared-components-core-Text-
                  <br />
                  text-module__type-c-var2--1WOVE {"{"}
                </Dim>
              </Rule>
            </RulesCol>
            <ScrollRail $w={19} $bg="#2a2b2d"><ScrollGrip $h={52} /></ScrollRail>
            <ScrollRail $w={9} $bg="#202124">
              <MiniMap>
                <MiniMark $c="#ab8353" />
                <MiniMark $c="#deb973" />
                <MiniMark $c="#aebf79" />
                <MiniMark $c="#7fa9bb" />
                <MiniMark $c="#aebf79" />
                <MiniMark $c="#deb973" />
                <MiniMark $c="#ab8353" />
              </MiniMap>
            </ScrollRail>
            <ScrollRail $w={21} $bg="#2a2b2d"><ScrollGrip $h={75} /></ScrollRail>
          </StylesBody>
          <Drawer>
            <BarIcon $w={38}><MoreVertical size={20} /></BarIcon>
            <DevTab $active $pad={13}>Console</DevTab>
            <DevTab $pad={13}>What's New</DevTab>
            <DevTab $pad={26}>Issues</DevTab>
            <DrawerClose $w={44}><X size={20} strokeWidth={2.500} /></DrawerClose>
          </Drawer>
        </Devtools>
      </Main>

      <Taskbar>
        <Launcher $w={62}><FaWindows size={32} /></Launcher>
        <Launcher $w={62}><Search size={22} strokeWidth={1.500} style={{ transform: "scaleX(-1)" }} /></Launcher>
        <Launcher $w={62}>
          <svg width="20" height="30" viewBox="0 0 20 30" fill="none" stroke="#fff" strokeWidth="1.200">
            <path d="M1 7h12M1 11h12v10H1zM1 25h12M17 3v24M1 11v10" />
          </svg>
        </Launcher>
        {launchers.map((item, i) => (
          <Launcher key={i} $on={item.on} $bright={item.bright}>{item.icon}</Launcher>
        ))}
        <Tray>
          <TrayIcon $left={0}><Users size={20} strokeWidth={1.500} /></TrayIcon>
          <TrayIcon $left={26}><ChevronUp size={16} strokeWidth={3} /></TrayIcon>
          <TrayIcon $left={14}><BatteryCharging size={20} strokeWidth={1.500} /></TrayIcon>
          <TrayIcon $left={12}><Wifi size={20} strokeWidth={1.500} /></TrayIcon>
          <TrayIcon $left={6}><Volume2 size={20} strokeWidth={1.500} /></TrayIcon>
          <Lang>РУС</Lang>
          <Clock>
            22:55
            <br />
            20.04.2021
          </Clock>
          <Notice>
            <NoticeSheet />
            <NoticeCount>7</NoticeCount>
          </Notice>
        </Tray>
      </Taskbar>

      <RedArrow width="297" height="36" viewBox="0 0 297 36">
        <path d="M0 17.500L120 15.500L283 14.500V21.500L120 20L0 18.500Z" fill="#d8120f" />
        <path d="M274 6L295 18L274 31L283 18Z" fill="#d8120f" />
      </RedArrow>
      <Cursor width="14" height="20" viewBox="0 0 14 20">
        <path d="M1 1v15l4-3 3 6 3-1-3-6h5z" fill="#fff" stroke="#111" />
      </Cursor>
    </Root>
  );
}
